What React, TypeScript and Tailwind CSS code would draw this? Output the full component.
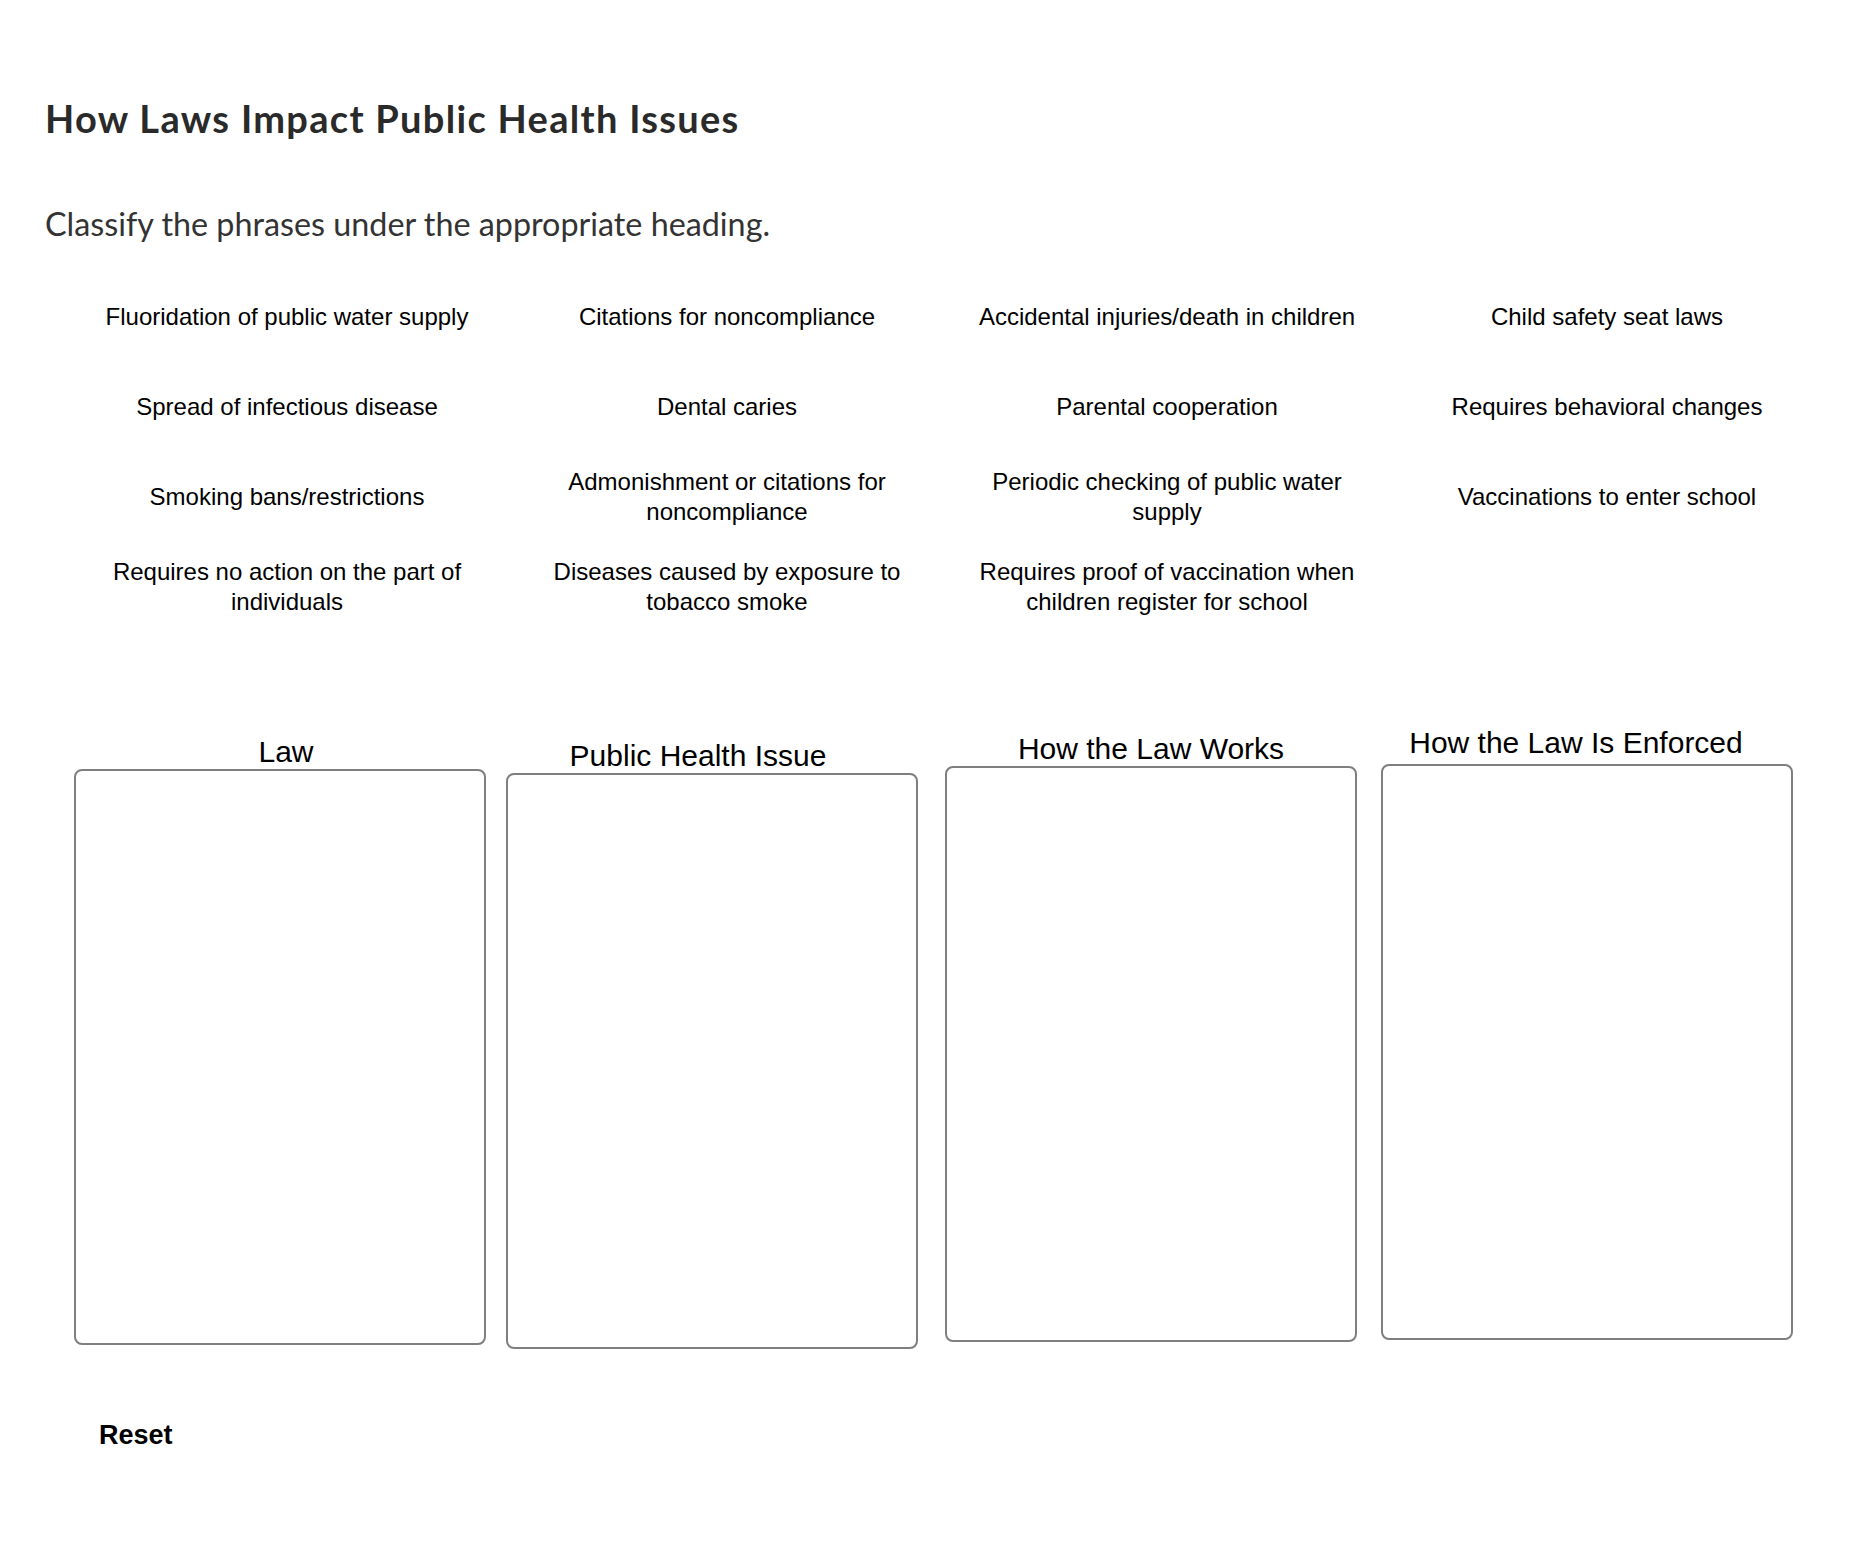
import React from "react";

type Bin = {
  title: string;
  col: string;
  head: string;
};

const phrases: string[] = [
  "Fluoridation of public water supply",
  "Citations for noncompliance",
  "Accidental injuries/death in children",
  "Child safety seat laws",
  "Spread of infectious disease",
  "Dental caries",
  "Parental cooperation",
  "Requires behavioral changes",
  "Smoking bans/restrictions",
  "Admonishment or citations for noncompliance",
  "Periodic checking of public water supply",
  "Vaccinations to enter school",
  "Requires no action on the part of individuals",
  "Diseases caused by exposure to tobacco smoke",
  "Requires proof of vaccination when children register for school",
];

const bins: Bin[] = [
  { title: "Law", col: "mt-[0px] ml-[0px]", head: "pl-[12px]" },
  { title: "Public Health Issue", col: "mt-[4px] ml-[20px]", head: "pr-[28px]" },
  { title: "How the Law Works", col: "mt-[-3px] ml-[27px]", head: "pl-[0px]" },
  { title: "How the Law Is Enforced", col: "mt-[-9px] ml-[24px]", head: "pr-[22px] mb-[4px]" },
];

function PhraseCard({ text }: { text: string }) {
  return (
    <div className="flex h-[90px] items-center justify-center px-[20px] text-center">
      <span className="text-[24px] leading-[30px] text-black [font-family:'Liberation_Sans',Arial,sans-serif]">
        {text}
      </span>
    </div>
  );
}

function DropBin({ bin }: { bin: Bin }) {
  return (
    <div className={`flex w-[412px] flex-col ${bin.col}`}>
      <div
        className={`h-[34px] w-full text-center text-[30px] leading-[34px] text-black [font-family:'Liberation_Sans',Arial,sans-serif] ${bin.head}`}
      >
        {bin.title}
      </div>
      <div className="h-[576px] w-full rounded-[8px] border-2 border-[#7f7f7f] bg-white" />
    </div>
  );
}

export default function App() {
  return (
    <div className="min-h-[1551px] w-full bg-white">
      <div className="pl-[45px] pt-[94px]">
        <h1 className="text-[38px] font-bold leading-[48px] tracking-[1.3px] text-[#2a2a2a] [font-family:Lato,'Noto_Sans',sans-serif]">
          How Laws Impact Public Health Issues
        </h1>
        <p className="mt-[62px] text-[32.3px] font-normal leading-[40px] text-[#333333] [font-family:Lato,'Noto_Sans',sans-serif]">
          Classify the phrases under the appropriate heading.
        </p>

        <div className="ml-[22px] mt-[28px] grid w-[1760px] grid-cols-4">
          {phrases.map((p) => (
            <PhraseCard key={p} text={p} />
          ))}
        </div>

        <div className="ml-[29px] mt-[103px] flex items-start">
          {bins.map((b) => (
            <DropBin key={b.title} bin={b} />
          ))}
        </div>

        <button
          type="button"
          className="ml-[54px] mt-[70px] text-[27px] font-bold leading-[32px] text-black [font-family:'Liberation_Sans',Arial,sans-serif]"
        >
          Reset
        </button>
      </div>
    </div>
  );
}
